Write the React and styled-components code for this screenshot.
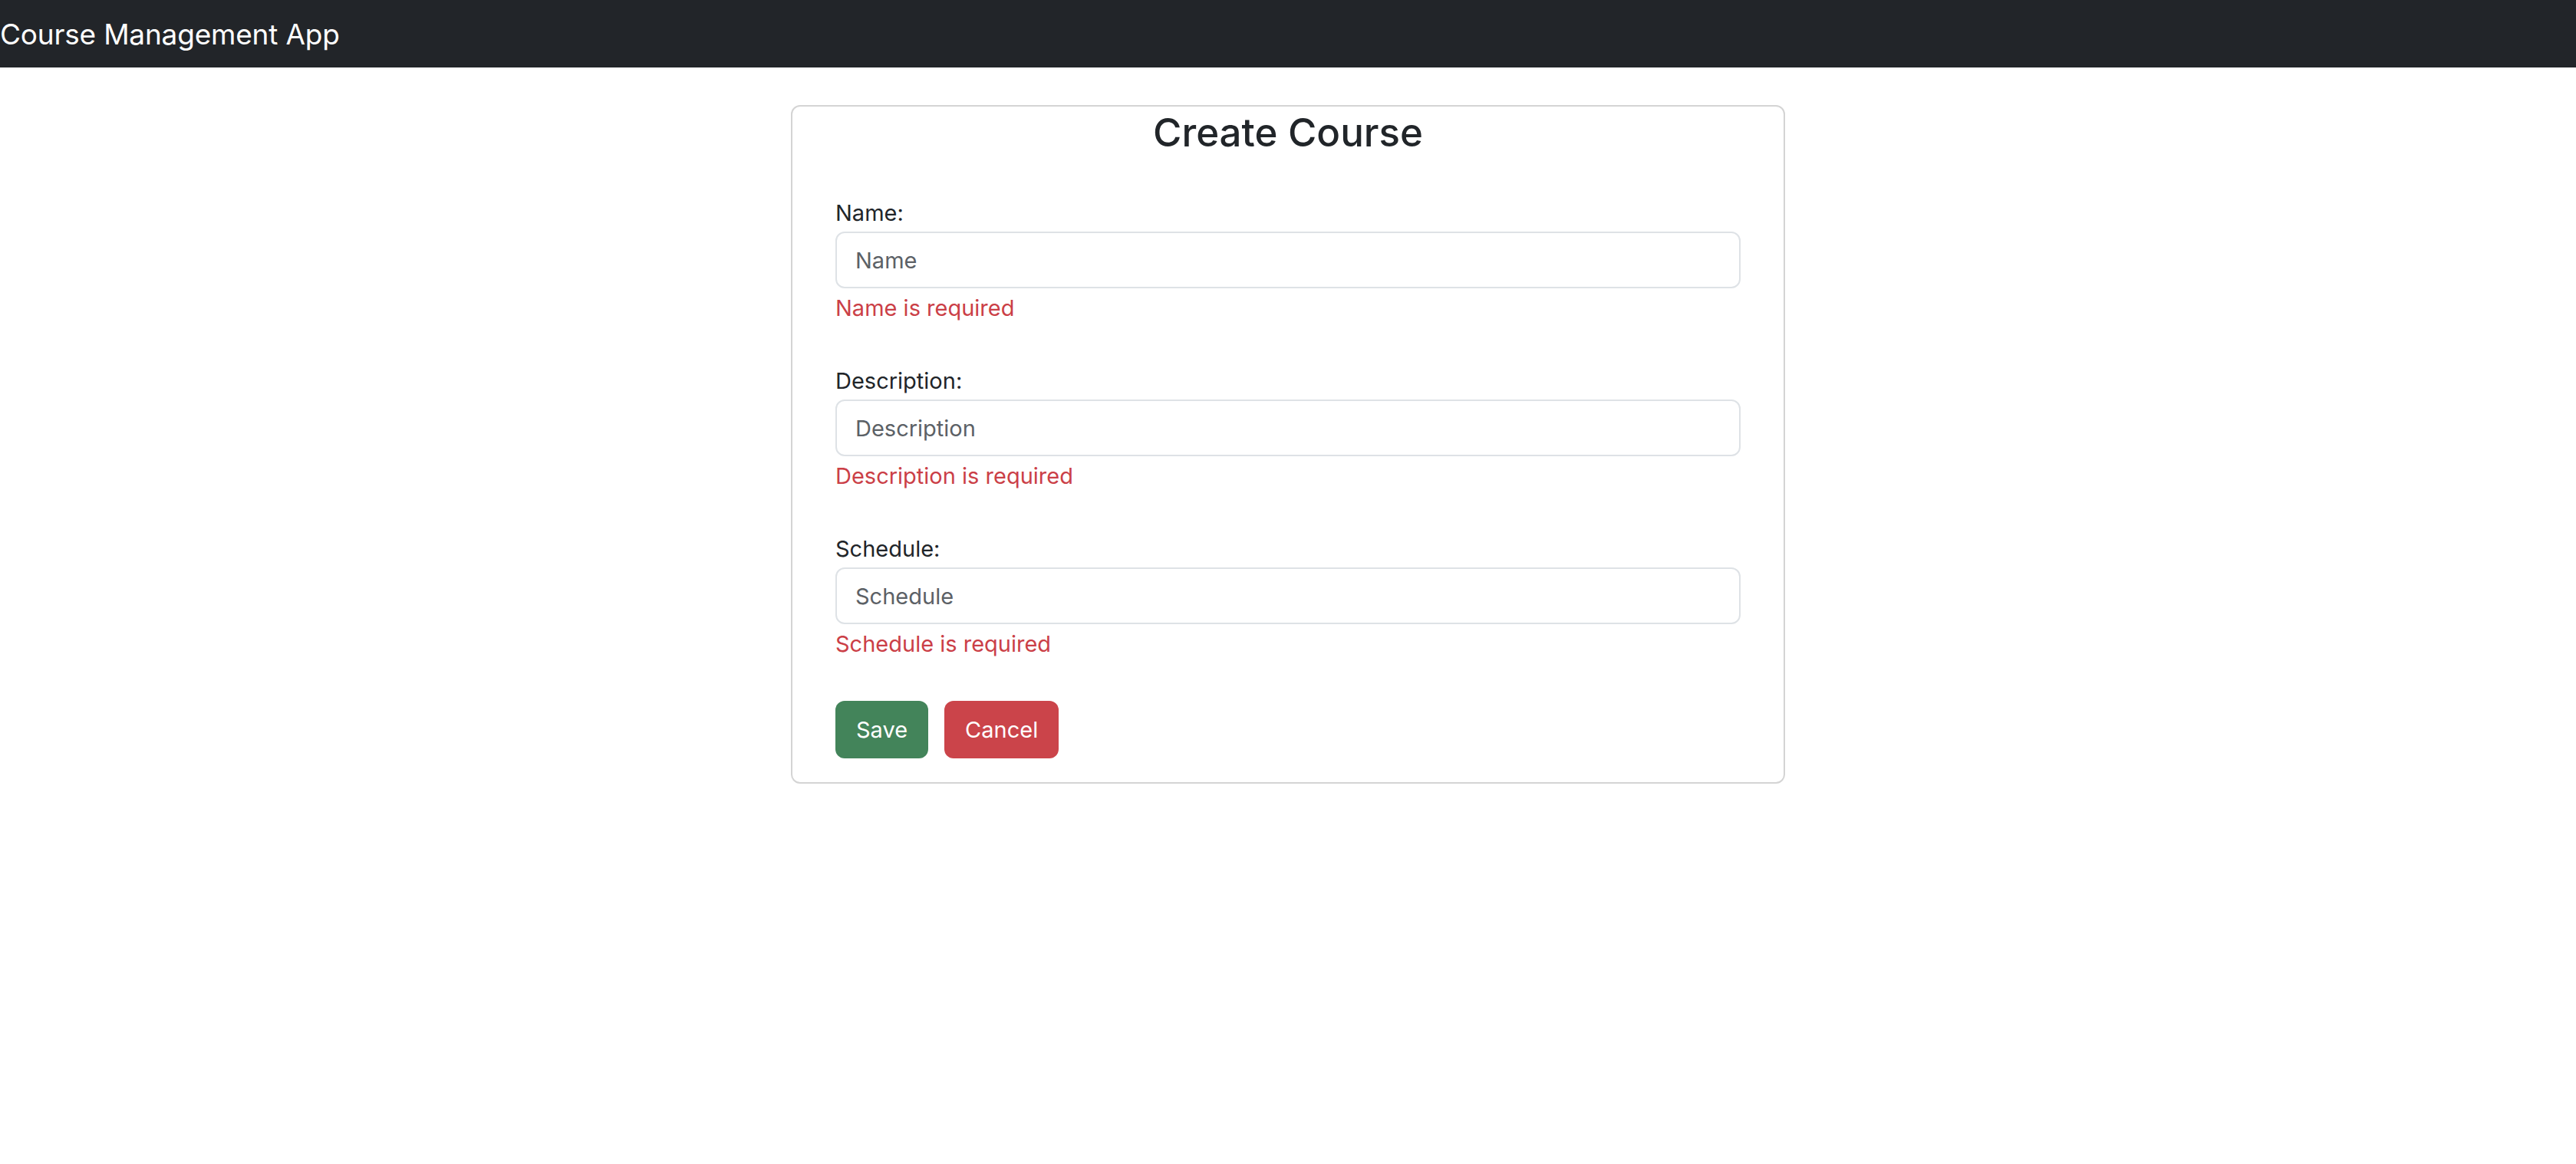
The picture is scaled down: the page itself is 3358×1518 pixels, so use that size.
import React from 'react'
import styled, { createGlobalStyle } from 'styled-components'

const GlobalStyle = createGlobalStyle`
  * {
    box-sizing: border-box;
  }

  body {
    margin: 0;
    background: #ffffff;
    color: #212529;
    font-family: Inter, 'Liberation Sans', Arial, sans-serif;
  }
`

const Navbar = styled.nav`
  display: flex;
  align-items: center;
  height: 88px;
  background: #222529;
`

const Brand = styled.span`
  color: #ffffff;
  font-size: 37px;
  line-height: 1;
  letter-spacing: -0.2px;
`

const Main = styled.main`
  display: flex;
  justify-content: center;
  padding-top: 49px;
`

const Card = styled.form`
  display: flex;
  flex-direction: column;
  width: 1296px;
  padding: 3px 56px 31px;
  border: 2px solid #d4d4d4;
  border-radius: 12px;
`

const Title = styled.h2`
  margin: 0 0 53px;
  font-size: 51px;
  font-weight: 500;
  line-height: 62px;
  text-align: center;
  color: #212529;
`

const Field = styled.div`
  display: flex;
  flex-direction: column;
  margin-bottom: 53px;

  &:last-of-type {
    margin-bottom: 50px;
  }
`

const Label = styled.label`
  margin-bottom: 3px;
  font-size: 29px;
  line-height: 42px;
  color: #212529;
`

const Input = styled.input`
  height: 74px;
  padding: 0 24px;
  border: 2px solid #dee2e6;
  border-radius: 12px;
  font-family: inherit;
  font-size: 29px;
  color: #212529;
  background: #ffffff;

  &::placeholder {
    color: #5c6166;
  }
`

const ErrorText = styled.div`
  margin-top: 5px;
  font-size: 29px;
  line-height: 42px;
  color: #cb3f47;
`

const Actions = styled.div`
  display: flex;
  gap: 21px;
`

const Button = styled.button`
  height: 75px;
  padding: 0 27px;
  border: none;
  border-radius: 12px;
  font-family: inherit;
  font-size: 29px;
  color: #ffffff;
  background: ${({ variant }) => (variant === 'danger' ? '#cb444a' : '#43845a')};
  cursor: pointer;
`

const fields = [
  { id: 'name', label: 'Name' },
  { id: 'description', label: 'Description' },
  { id: 'schedule', label: 'Schedule' }
]

const App = () => (
  <>
    <GlobalStyle />
    <Navbar>
      <Brand>Course Management App</Brand>
    </Navbar>
    <Main>
      <Card onSubmit={e => e.preventDefault()}>
        <Title>Create Course</Title>
        {fields.map(({ id, label }) => (
          <Field key={id}>
            <Label htmlFor={id}>{label}:</Label>
            <Input id={id} placeholder={label} />
            <ErrorText>{label} is required</ErrorText>
          </Field>
        ))}
        <Actions>
          <Button type="submit">Save</Button>
          <Button type="button" variant="danger">
            Cancel
          </Button>
        </Actions>
      </Card>
    </Main>
  </>
)

export default App
